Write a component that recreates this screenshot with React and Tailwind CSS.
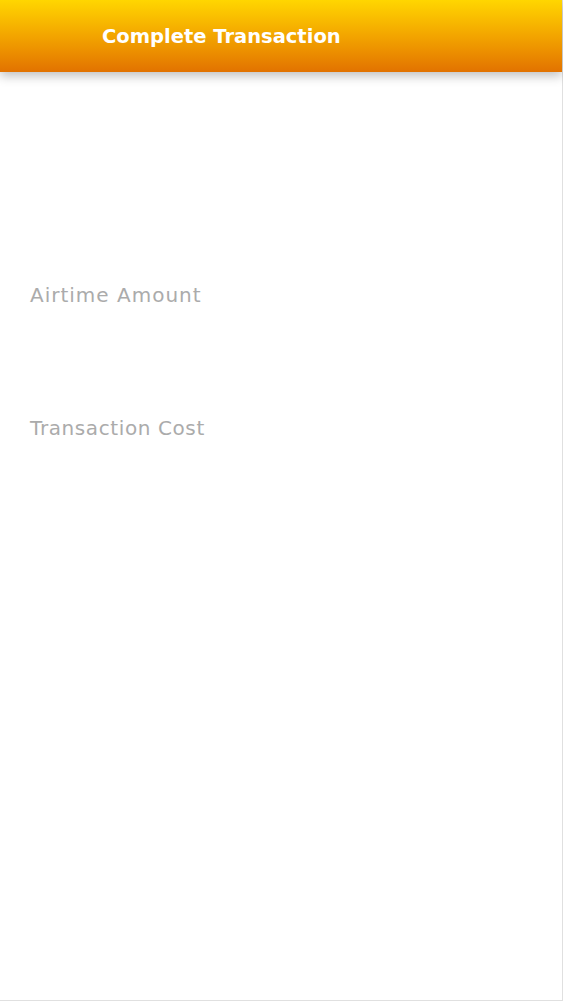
export default function App() {
  return (
    <div className="w-[563px] h-[1001px] bg-white border-r border-b border-[#e0e0e0] flex flex-col" style={{ fontFamily: '"DejaVu Sans", sans-serif' }}>
      <div className="h-[72px] w-full bg-gradient-to-b from-[#ffd600] to-[#e27200] shadow-[0_4px_10px_rgba(0,0,0,0.25)] flex items-center pl-[102px] pt-[2px] shrink-0">
        <span className="text-white text-[19.5px] font-bold leading-none">Complete Transaction</span>
      </div>
      <div className="flex flex-col pl-[30px] pt-[211px]">
        <div className="text-[#ababab] text-[20px] tracking-[1px] leading-[24px] h-[24px]">Airtime Amount</div>
        <div className="h-[109px]" />
        <div className="text-[#ababab] text-[20px] tracking-[0.6px] leading-[24px]">Transaction Cost</div>
      </div>
    </div>
  );
}
